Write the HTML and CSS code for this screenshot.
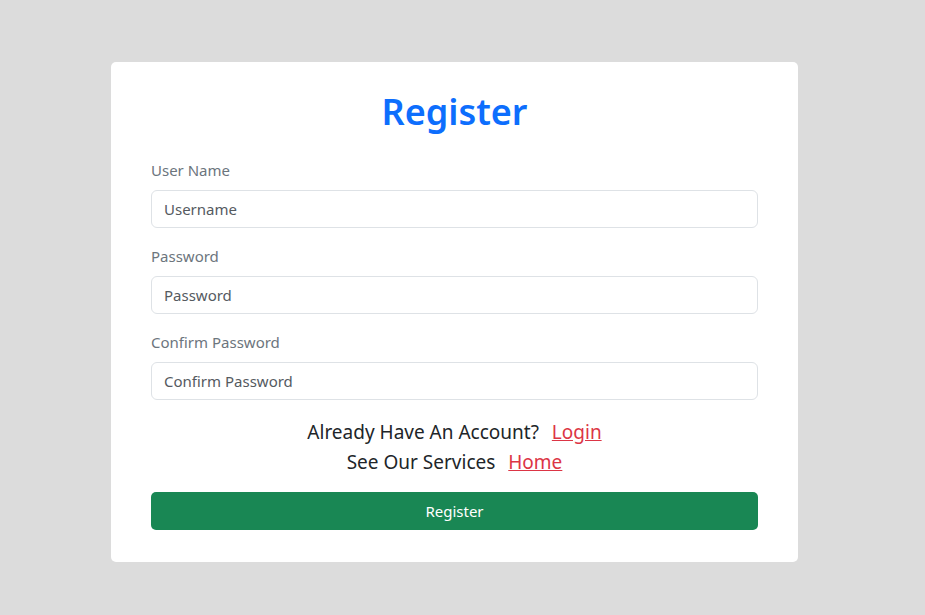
FILE: index.html
```html
<!DOCTYPE html>
<html lang="en">
<head>
<meta charset="utf-8">
<title>Register</title>
<link rel="stylesheet" href="styles.css">
</head>
<body>
<main class="page">
  <section class="card">
    <h1 class="title">Register</h1>
    <form class="form">
      <div class="field">
        <label class="label" for="u">User Name</label>
        <input class="input" id="u" type="text" placeholder="Username">
      </div>
      <div class="field">
        <label class="label" for="p">Password</label>
        <input class="input" id="p" type="password" placeholder="Password">
      </div>
      <div class="field">
        <label class="label" for="c">Confirm Password</label>
        <input class="input" id="c" type="password" placeholder="Confirm Password">
      </div>
      <div class="links">
        <p class="line">Already Have An Account? <a href="#" class="link">Login</a></p>
        <p class="line">See Our Services <a href="#" class="link">Home</a></p>
      </div>
      <button type="button" class="btn">Register</button>
    </form>
  </section>
</main>
</body>
</html>
```
FILE: styles.css
```css
html, body {
  margin: 0;
  padding: 0;
}
body {
  background: #dcdcdc;
  font-family: "Noto Sans", "Open Sans", sans-serif;
  color: #212529;
  width: 925px;
  height: 615px;
  overflow: hidden;
}
.page {
  padding-top: 62px;
  padding-left: 111px;
}
.card {
  box-sizing: border-box;
  width: 687px;
  height: 500px;
  background: #fff;
  border-radius: 5px;
  padding: 26px 40px 32px;
}
.title {
  margin: 0 0 22px;
  text-align: center;
  font-size: 36px;
  line-height: 48px;
  font-weight: 600;
  color: #0d6efd;
}
.form {
  display: flex;
  flex-direction: column;
}
.field {
  display: flex;
  flex-direction: column;
  margin-bottom: 16px;
}
.label {
  font-size: 15px;
  line-height: 24px;
  color: #6c757d;
  margin-bottom: 8px;
}
.input {
  box-sizing: border-box;
  height: 38px;
  border: 1px solid #dee2e6;
  border-radius: 6px;
  padding: 0 12px;
  font-family: inherit;
  font-size: 15px;
  color: #212529;
  background: #fff;
}
.input::placeholder {
  color: #555a5f;
}
.links {
  display: flex;
  flex-direction: column;
  align-items: center;
  margin-top: 1px;
  margin-bottom: 15px;
}
.line {
  margin: 0;
  font-size: 19px;
  line-height: 30px;
  color: #212529;
}
.link {
  color: #dc3545;
  margin-left: 8px;
}
.btn {
  height: 38px;
  border: none;
  border-radius: 5px;
  background: #198754;
  color: #fff;
  font-family: inherit;
  font-size: 15px;
}
```
